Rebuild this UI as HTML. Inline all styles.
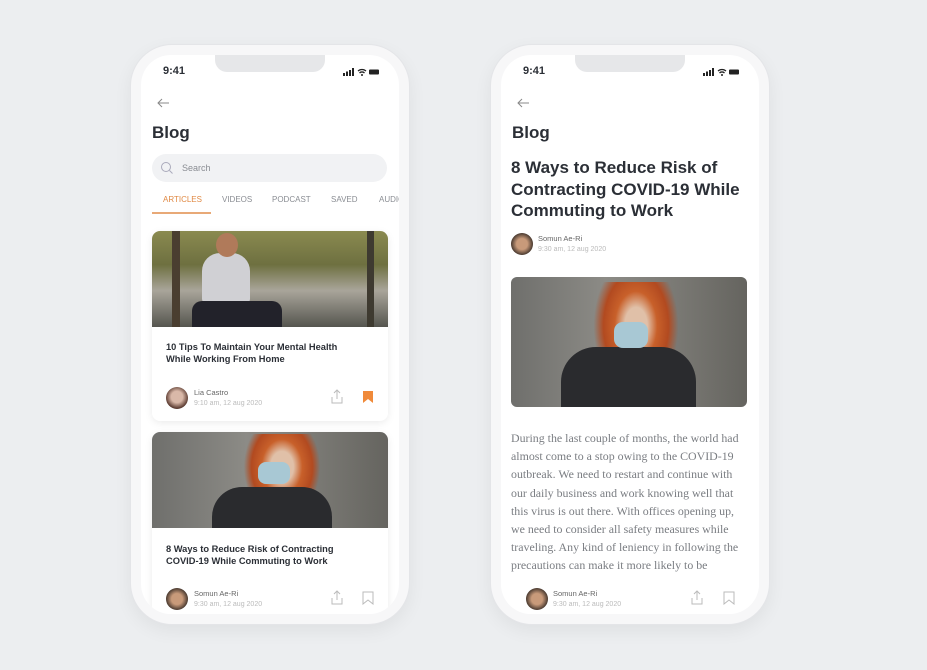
<!DOCTYPE html>
<html><head><meta charset="utf-8"><style>
*{margin:0;padding:0;box-sizing:border-box}
body{width:927px;height:670px;background:#eceef0;position:relative;overflow:hidden;font-family:"Liberation Sans",sans-serif;color:#2b2f36}
.a{position:absolute}
.frame{position:absolute;width:280px;height:581px;top:44px;border-radius:42px;background:#f7f7f8;box-shadow:0 6px 18px rgba(0,0,0,.06);border:1px solid #e4e5e8}
.screen{position:absolute;left:10px;top:10px;width:258px;height:559px;border-radius:30px;background:#fff;overflow:hidden}
.notch{position:absolute;left:74px;top:0;width:110px;height:17px;background:#e6e7e9;border-radius:0 0 12px 12px}
.time{position:absolute;left:22px;top:10px;font-size:11px;font-weight:bold}
.stat{position:absolute;right:20px;top:13px;display:flex;gap:3px;align-items:flex-end}
.blog{position:absolute;font-size:17px;font-weight:bold}
.card{position:absolute;left:11px;width:236px;background:#fff;border-radius:8px;box-shadow:0 2px 8px rgba(0,0,0,.08);overflow:hidden}
.ct{position:absolute;left:14px;font-size:9.3px;font-weight:bold;line-height:12px;color:#2b2f36}
.av{position:absolute;width:22px;height:22px;border-radius:50%}
.nm{position:absolute;font-size:7.5px;color:#666}
.dt{position:absolute;font-size:7px;color:#bbb}
.tab{position:absolute;top:140px;font-size:8px;color:#8a8d93}
p.body{position:absolute;left:10px;top:374px;width:242px;font-family:"Liberation Serif",serif;font-size:11.9px;line-height:18.2px;color:#7a7d82;white-space:nowrap}
</style></head><body>

<!-- LEFT PHONE -->
<div class="frame" style="left:130px">
<div class="screen">
 <div class="notch"></div>
 <div class="time">9:41</div>
 <div class="stat"><svg width="36" height="8"><rect x="0" y="5" width="2" height="3" fill="#222"/><rect x="3" y="3.5" width="2" height="4.5" fill="#222"/><rect x="6" y="2" width="2" height="6" fill="#222"/><rect x="9" y="0" width="2" height="8" fill="#222"/><path d="M15 3a6 6 0 0 1 8 0M16.5 5a3.5 3.5 0 0 1 5 0" stroke="#222" stroke-width="1.3" fill="none"/><circle cx="19" cy="7" r="1" fill="#222"/><rect x="26" y="1.5" width="10" height="5" rx="1" fill="#222"/></svg></div>
 <svg class="a" style="left:15px;top:43px" width="14" height="10"><path d="M13 5H2M6 1L2 5l4 4" stroke="#888" stroke-width="1" fill="none"/></svg>
 <div class="blog" style="left:11px;top:68px">Blog</div>
 <div class="a" style="left:11px;top:99px;width:235px;height:28px;border-radius:14px;background:#f1f2f4"></div>
 <svg class="a" style="left:19px;top:106px" width="14" height="14"><circle cx="6" cy="6" r="4.5" stroke="#aab" stroke-width="1" fill="none"/><path d="M9.5 9.5l3 3" stroke="#aab"/></svg>
 <div class="a" style="left:41px;top:108px;font-size:9px;color:#8a8d93">Search</div>
 <div class="tab" style="left:22px;color:#e08a45">ARTICLES</div>
 <div class="tab" style="left:81px">VIDEOS</div>
 <div class="tab" style="left:131px">PODCAST</div>
 <div class="tab" style="left:190px">SAVED</div>
 <div class="tab" style="left:238px">AUDIO</div>
 <div class="a" style="left:11px;top:157px;width:59px;height:2px;background:#e8a977"></div>

 <div class="card" style="top:176px;height:190px">
  <div class="a" style="left:0;top:0;width:236px;height:96px;background:linear-gradient(180deg,#8a8a50 0%,#6e7040 35%,#a9a59a 62%,#55554f 100%)"></div>
  <div class="a" style="left:20px;top:0;width:8px;height:96px;background:#4a3e30"></div>
  <div class="a" style="left:215px;top:0;width:7px;height:96px;background:#3e3a30"></div>
  <div class="a" style="left:50px;top:22px;width:48px;height:50px;background:#d0d0d4;border-radius:18px 18px 4px 4px"></div>
  <div class="a" style="left:40px;top:70px;width:90px;height:26px;background:#22222a;border-radius:10px 10px 0 0"></div>
  <div class="a" style="left:64px;top:2px;width:22px;height:24px;background:#b07a5a;border-radius:50%"></div>
  <div class="ct" style="top:110px">10 Tips To Maintain Your Mental Health<br>While Working From Home</div>
  <div class="av" style="left:14px;top:156px;background:radial-gradient(circle at 50% 45%,#d9b8a8 35%,#5a3a30 70%)"></div>
  <div class="nm" style="left:42px;top:157px">Lia Castro</div>
  <div class="dt" style="left:42px;top:169px">9:10 am, 12 aug 2020</div>
  <svg class="a" style="left:178px;top:158px" width="14" height="16"><path d="M7 1v9M4 4l3-3 3 3M2 8v6h10V8" stroke="#bbb" fill="none"/></svg>
  <svg class="a" style="left:210px;top:159px" width="12" height="14"><path d="M1 1h10v12l-5-4-5 4z" fill="#f08a3a"/></svg>
 </div>

 <div class="card" style="top:377px;height:200px">
  <div class="a" style="left:0;top:0;width:236px;height:96px;background:linear-gradient(90deg,#6f6f6c,#8c8b86 40%,#7a7974 70%,#65645f)"></div>
  <div class="a" style="left:85px;top:2px;width:90px;height:94px;background:radial-gradient(ellipse at 50% 35%,#e0c0a8 18%,#c8602a 32%,#b24a20 48%,rgba(0,0,0,0) 60%)"></div>
  <div class="a" style="left:60px;top:55px;width:120px;height:41px;background:#2a2b2e;border-radius:30px 30px 0 0"></div>
  <div class="a" style="left:106px;top:30px;width:32px;height:22px;background:#a8c8d4;border-radius:8px"></div>
  <div class="ct" style="top:111px">8 Ways to Reduce Risk of Contracting<br>COVID-19 While Commuting to Work</div>
  <div class="av" style="left:14px;top:156px;background:radial-gradient(circle,#c89a7a 35%,#4a3a30 70%)"></div>
  <div class="nm" style="left:42px;top:157px">Somun Ae-Ri</div>
  <div class="dt" style="left:42px;top:169px">9:30 am, 12 aug 2020</div>
  <svg class="a" style="left:178px;top:158px" width="14" height="16"><path d="M7 1v9M4 4l3-3 3 3M2 8v6h10V8" stroke="#bbb" fill="none"/></svg>
  <svg class="a" style="left:210px;top:159px" width="12" height="14"><path d="M1 1h10v12l-5-4-5 4z" stroke="#bbb" fill="none"/></svg>
 </div>
</div>
</div>

<!-- RIGHT PHONE -->
<div class="frame" style="left:490px">
<div class="screen">
 <div class="notch"></div>
 <div class="time">9:41</div>
 <div class="stat"><svg width="36" height="8"><rect x="0" y="5" width="2" height="3" fill="#222"/><rect x="3" y="3.5" width="2" height="4.5" fill="#222"/><rect x="6" y="2" width="2" height="6" fill="#222"/><rect x="9" y="0" width="2" height="8" fill="#222"/><path d="M15 3a6 6 0 0 1 8 0M16.5 5a3.5 3.5 0 0 1 5 0" stroke="#222" stroke-width="1.3" fill="none"/><circle cx="19" cy="7" r="1" fill="#222"/><rect x="26" y="1.5" width="10" height="5" rx="1" fill="#222"/></svg></div>
 <svg class="a" style="left:15px;top:43px" width="14" height="10"><path d="M13 5H2M6 1L2 5l4 4" stroke="#888" stroke-width="1" fill="none"/></svg>
 <div class="blog" style="left:11px;top:68px">Blog</div>
 <div class="a" style="left:10px;top:102px;font-size:17px;font-weight:bold;line-height:21.5px;width:245px">8 Ways to Reduce Risk of Contracting COVID-19 While Commuting to Work</div>
 <div class="av" style="left:10px;top:178px;background:radial-gradient(circle,#c89a7a 35%,#4a3a30 70%)"></div>
 <div class="nm" style="left:37px;top:179px">Somun Ae-Ri</div>
 <div class="dt" style="left:37px;top:191px">9:30 am, 12 aug 2020</div>
 <div class="a" style="left:10px;top:222px;width:236px;height:130px;border-radius:6px;overflow:hidden;background:linear-gradient(90deg,#6f6f6c,#8c8b86 40%,#7a7974 70%,#65645f)">
  <div class="a" style="left:75px;top:5px;width:100px;height:125px;background:radial-gradient(ellipse at 50% 35%,#e0c0a8 16%,#c8602a 30%,#b24a20 46%,rgba(0,0,0,0) 60%)"></div>
  <div class="a" style="left:50px;top:70px;width:135px;height:60px;background:#2a2b2e;border-radius:35px 35px 0 0"></div>
  <div class="a" style="left:103px;top:45px;width:34px;height:26px;background:#a8c8d4;border-radius:9px"></div>
 </div>
 <p class="body">During the last couple of months, the world had<br>almost come to a stop owing to the COVID-19<br>outbreak. We need to restart and continue with<br>our daily business and work knowing well that<br>this virus is out there. With offices opening up,<br>we need to consider all safety measures while<br>traveling. Any kind of leniency in following the<br>precautions can make it more likely to be</p>
 <div class="a" style="left:0;top:518px;width:258px;height:41px;background:#fff"></div>
 <div class="av" style="left:25px;top:533px;background:radial-gradient(circle,#c89a7a 35%,#4a3a30 70%)"></div>
 <div class="nm" style="left:52px;top:534px">Somun Ae-Ri</div>
 <div class="dt" style="left:52px;top:546px">9:30 am, 12 aug 2020</div>
 <svg class="a" style="left:189px;top:535px" width="14" height="16"><path d="M7 1v9M4 4l3-3 3 3M2 8v6h10V8" stroke="#bbb" fill="none"/></svg>
 <svg class="a" style="left:222px;top:536px" width="12" height="14"><path d="M1 1h10v12l-5-4-5 4z" stroke="#bbb" fill="none"/></svg>
</div>
</div>
</body></html>
